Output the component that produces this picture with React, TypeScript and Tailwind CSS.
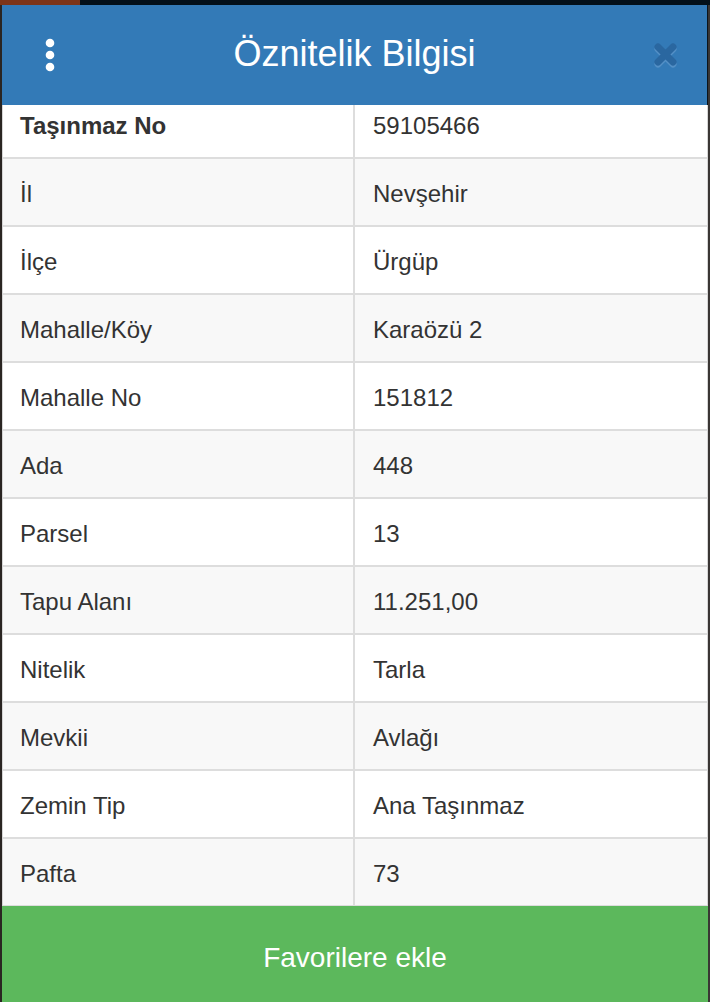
const rows: [string, string][] = [
  ['Taşınmaz No', '59105466'],
  ['İl', 'Nevşehir'],
  ['İlçe', 'Ürgüp'],
  ['Mahalle/Köy', 'Karaözü 2'],
  ['Mahalle No', '151812'],
  ['Ada', '448'],
  ['Parsel', '13'],
  ['Tapu Alanı', '11.251,00'],
  ['Nitelik', 'Tarla'],
  ['Mevkii', 'Avlağı'],
  ['Zemin Tip', 'Ana Taşınmaz'],
  ['Pafta', '73'],
]

export default function App() {
  return (
    <div
      className="flex h-[1002px] w-[710px] flex-col overflow-hidden bg-[#0b141c]"
      style={{ fontFamily: '"Liberation Sans", Arial, sans-serif' }}
    >
      {/* strip of the page behind the modal */}
      <div className="flex h-[5px] shrink-0">
        <div className="w-[80px] bg-[#7d3418]" />
        <div className="flex-1 bg-[#03101a]" />
      </div>

      <div className="flex min-h-0 flex-1">
        <div className="w-[2px] shrink-0 bg-[#2a2522]" />

        <div className="flex min-w-0 flex-1 flex-col">
          {/* Header */}
          <div className="flex h-[100px] w-[705px] shrink-0 items-center bg-[#337ab7] text-white">
            <div className="flex w-[96px] justify-center">
              <svg width="12" height="34" viewBox="0 0 12 34">
                <circle cx="6" cy="5" r="4.3" fill="#fff" />
                <circle cx="6" cy="17" r="4.3" fill="#fff" />
                <circle cx="6" cy="29" r="4.3" fill="#fff" />
              </svg>
            </div>
            <div className="flex-1 pb-[2px] text-center text-[36px] leading-none">Öznitelik Bilgisi</div>
            <div className="flex w-[96px] justify-center pl-[14px]">
              <svg width="26" height="26" viewBox="0 0 26 26">
                <path
                  d="M5 6 L20 21 M20 6 L5 21"
                  stroke="#6a9fd0"
                  strokeWidth="7"
                  strokeLinecap="round"
                  transform="translate(0 1)"
                  opacity="0.6"
                />
                <path d="M5 5 L20 20 M20 5 L5 20" stroke="#2a67a0" strokeWidth="7" strokeLinecap="round" />
              </svg>
            </div>
          </div>

          {/* Table */}
          <div className="min-h-0 flex-1 overflow-hidden border-x-[1px] border-[#d6d6d6] bg-white">
            <div className="-mt-[14px]">
              {rows.map(([label, value], i) => (
                <div
                  key={label}
                  className={
                    'flex h-[68px] border-b-2 border-[#dddddd] text-[24px] text-[#333333] ' +
                    (i % 2 === 1 ? 'bg-[#f8f8f8]' : 'bg-white')
                  }
                >
                  <div
                    className={
                      'flex w-[352px] items-center border-r-2 border-[#dddddd] pl-[17px] pt-[3px] ' +
                      (i === 0 ? 'font-bold' : '')
                    }
                  >
                    {label}
                  </div>
                  <div className="flex flex-1 items-center pl-[18px] pt-[3px]">{value}</div>
                </div>
              ))}
            </div>
          </div>

          {/* Button */}
          <button
            type="button"
            className="flex h-[96px] w-[706px] shrink-0 items-center justify-center bg-[#5cb85c] pt-[8px] text-[28px] text-white"
          >
            Favorilere ekle
          </button>
        </div>

        <div className="w-[2px] shrink-0 bg-[#3a3634]" />
      </div>
    </div>
  )
}
